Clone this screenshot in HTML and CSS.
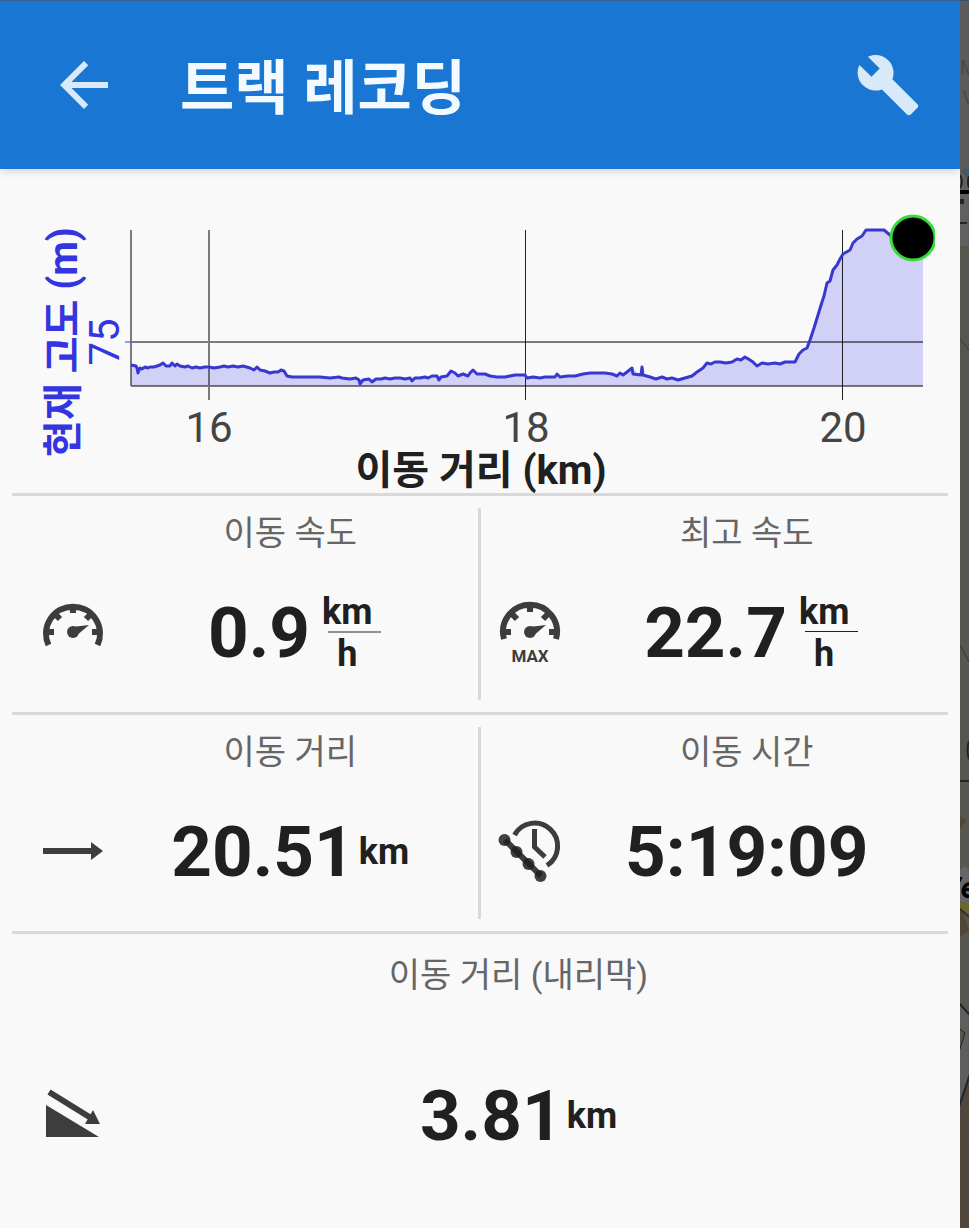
FILE: index.html
```html
<!DOCTYPE html>
<html lang="ko">
<head>
    <meta charset="UTF-8">
    <meta name="viewport" content="width=device-width, initial-scale=1">
    <title>트랙 레코딩</title>
    <link rel="stylesheet" href="styles.css">
</head>
<body>
<main id="panel">
    <header id="toolbar">
        <button class="icon-btn" type="button" aria-label="뒤로">
            <svg class="back" viewBox="0 0 24 24"><path d="M20 11H7.83l5.59-5.59L12 4l-8 8 8 8 1.41-1.41L7.83 13H20v-2z"/></svg>
        </button>
        <h1>트랙 레코딩</h1>
        <button class="icon-btn" type="button" aria-label="설정">
            <svg class="wrench" viewBox="0 0 24 24"><path d="M22.7 19l-9.1-9.1c.9-2.3.4-5-1.5-6.9-2-2-5-2.4-7.4-1.3L9 6 6 9 1.6 4.7C.4 7.1.9 10.1 2.9 12.1c1.9 1.9 4.6 2.4 6.9 1.5l9.1 9.1c.4.4 1 .4 1.4 0l2.3-2.3c.5-.4.5-1.1.1-1.4z"/></svg>
        </button>
    </header>

    <!-- altitude over distance -->
    <svg id="chart" viewBox="0 169 960 324">
        <defs>
            <clipPath id="plot"><rect x="125" y="200" width="810" height="200"/></clipPath>
        </defs>
        <path class="area" d="M131 386V365L136 366 138 373 140 368 150 367 160 365 163 363 166 366 172 363 175 366 177 364 185 367 192 368 209 367 228 366 243 366 250 368 254 370 257 367 260 370 270 373 278 372 281 370 284 371 287 376 292 377 339 377 350 379 359 380 360 384 363 380 385 378 432 376 447 376 451 371 458 376 468 376 473 370 477 374 490 376 505 377 515 375 525 375 527 378 555 377 575 376 590 373 605 373 617 376 627 372 632 368 640 375 656 379 678 380 692 376 703 368 707 363 732 362 745 357 757 366 762 363 795 362 803 350 807 348 814 328 822 302 827 283 833 270 843 254 850 250 853 243 862 236 866 230 884 230 893 240H923V386z"/>
        <g class="grid">
            <path d="M131 230V386M131 386H923M209 230V400M131 342H923"/>
            <path class="thin" d="M525.500 230V400M842.500 230V400"/>
            <path class="tick" d="M125 342H131"/>
        </g>
        <polyline class="line" points="131,365 136,366 137,368 138,373 140,368 142,369 145,367 148,368 150,367 154,367 157,366 160,365 163,363 166,366 170,366 172,363 175,366 177,364 180,366 185,367 188,366 192,368 196,367 200,368 205,367 209,367 214,368 220,367 224,366 228,367 233,366 238,367 243,366 250,368 254,370 257,367 260,370 265,371 270,373 274,372 278,372 281,370 284,371 287,376 292,377 300,377 312,377 320,377 330,378 339,377 342,378 350,379 356,378 359,380 360,384 363,380 369,379 372,382 376,379 381,379 385,378 390,379 395,378 400,378 405,379 410,378 412,381 415,378 420,378 425,377 428,378 432,376 437,376 439,380 441,377 447,376 451,371 455,373 458,376 463,374 468,376 470,373 473,370 477,374 485,374 490,376 497,377 505,377 510,376 515,375 525,375 527,378 533,377 540,378 545,377 555,377 557,374 560,377 568,376 575,376 583,374 590,373 605,373 612,374 617,376 620,373 623,375 627,372 632,368 633,374 641,375 642,367 643,375 650,377 656,379 662,377 667,379 672,378 678,380 685,378 692,376 697,372 703,368 707,363 711,364 715,362 720,362 726,363 732,362 737,359 741,360 745,357 750,360 753,362 757,366 762,363 768,364 775,363 780,364 785,362 795,362 799,354 803,350 807,348 810,340 814,328 818,315 822,302 824,296 827,283 830,281 833,270 837,265 840,259 843,254 850,250 853,243 857,239 862,236 866,230 884,230 890,235 893,240"/>
        <circle class="marker" cx="913" cy="238" r="22" clip-path="url(#plot)"/>
        <text class="num" x="209" y="442">16</text>
        <text class="num" x="526" y="442">18</text>
        <text class="num" x="843" y="442">20</text>
        <text class="num blue" transform="translate(119 342) rotate(-90)">75</text>
        <text class="axis" x="481" y="484">이동 거리 (km)</text>
        <text class="axis blue" transform="translate(77 342) rotate(-90)">현재 고도 (m)</text>
    </svg>

    <section class="row">
        <div class="cell">
            <h2>이동 속도</h2>
            <svg class="icon" viewBox="-30 -30 60 60">
                <path class="stroke" d="M-24.500 13A27 27 0 1 1 24.500 13M0 -27V-19M-27 0H-19M27 0H19"/>
                <path class="stroke" d="M-19 -19L-13 -13M19 -19L13 -13"/>
                <circle r="6"/><path d="M-1 -5L16 -7 3 4z"/>
            </svg>
            <div class="value">0.9
                <div class="unit fraction"><span>km</span><span class="per">h</span></div>
            </div>
        </div>
        <div class="cell">
            <h2>최고 속도</h2>
            <svg class="icon" viewBox="-30 -30 60 60">
                <path class="stroke" d="M-26 7A27 27 0 1 1 26 7M0 -28V-20M-27 0H-19M27 0H19"/>
                <path class="stroke" d="M-19 -19L-13 -13M19 -19L13 -13"/>
                <circle r="6"/><path d="M-1 -5L16 -7 3 4z"/>
                <text y="30">MAX</text>
            </svg>
            <div class="value">22.7
                <div class="unit fraction"><span>km</span><span class="per dark">h</span></div>
            </div>
        </div>
    </section>

    <section class="row">
        <div class="cell">
            <h2>이동 거리</h2>
            <svg class="icon" viewBox="-30 -30 60 60">
                <path d="M-30 -3H18V-9L30 0 18 9V3H-30z"/>
            </svg>
            <div class="value">20.51
                <div class="unit">km</div>
            </div>
        </div>
        <div class="cell">
            <h2>이동 시간</h2>
            <svg class="icon" viewBox="-30 -30 60 60">
                <path class="stroke clock" d="M-15.500 -16A23 23 0 1 1 17 14.500M4.500 -22V-4L15 6"/>
                <path class="stroke track" d="M-25 -11L11 25"/>
                <g class="dots"><circle cx="-25.500" cy="-11" r="6"/><circle cx="-13.500" cy="1" r="6"/><circle cx="-1.500" cy="13" r="6"/><circle cx="10.500" cy="25" r="6"/></g>
            </svg>
            <div class="value">5:19:09</div>
        </div>
    </section>

    <section class="row last">
        <div class="cell">
            <h2>이동 거리 (내리막)</h2>
            <svg class="icon" viewBox="-30 -30 60 60">
                <path d="M-27 -10V22H26z"/>
                <path class="stroke" d="M-24 -23L18 3"/>
                <path d="M20 -5L27 9H12z"/>
            </svg>
            <div class="value">3.81
                <div class="unit">km</div>
            </div>
        </div>
    </section>
</main>

<!-- dimmed map behind the panel -->
<aside id="map">
    <svg viewBox="0 0 9 1228" preserveAspectRatio="xMinYMin slice">
        <path fill="#5b5c5b" d="M0 0H9V170H0z"/>
        <path fill="#34516b" d="M0 0H9V1H0z"/>
        <path fill="#3f5b6e" d="M2 168H9V180z"/>
        <path fill="#5f605f" d="M0 170L9 182V246H0z"/>
        <path d="M0 190H9V194H0z"/>
        <path fill="#242424" d="M0 199H4V204H0zM0 222H7V224H0z"/>
        <path fill="none" stroke="#222" stroke-width="2" d="M0 175Q4 182 0 188M9 176Q7 182 9 188"/>
        <path fill="none" stroke="#3d3228" stroke-width="1" d="M0 339L9 350M0 645L9 662"/>
        <path fill="none" stroke="#242424" stroke-width="2" d="M9 741Q6 750 9 759M0 781H9"/>
        <path fill="#50463a" stroke="#5d4936" d="M0 816L6 821 0 829M0 906L9 930 0 937"/>
        <path fill="#666" d="M0 870L5 866 9 870V905L0 901z"/>
        <path fill="#6b682b" d="M0 901L9 905V914L0 908z"/>
        <path fill="none" stroke="#303028" stroke-width="2" d="M0 909L9 917"/>
        <path fill="#50463c" d="M0 1110L9 1075V1228H0z"/>
        <path fill="#5e5e5d" stroke="#242424" stroke-width="2" d="M-2 1002L10 1015V1074L-2 1110z"/>
        <path fill="#55564c" stroke="#242424" d="M0 1029L5 1033 0 1049"/>
        <path fill="none" stroke="#604936" d="M9 1143L3 1149 6 1153 0 1163"/>
        <text class="place" x="-10" y="898">/e</text>
        <text class="faint" x="0" y="75">M</text>
        <text class="faint" x="2" y="105">V</text>
    </svg>
</aside>
</body>
</html>
```
FILE: styles.css
```css
* {
    margin: 0;
    padding: 0;
    box-sizing: border-box;
}

body {
    display: flex;
    min-height: 100vh;
    font-family: Roboto, "Noto Sans CJK KR", sans-serif;
    background-color: #57574f;
    color: #202020;
}

#panel {
    flex: 1;
    display: flex;
    flex-direction: column;
    background-color: #f9f9f9;
}

/* toolbar */
#toolbar {
    display: flex;
    align-items: center;
    height: 169px;
    padding: 0 39px 0 48px;
    border-top: 1px solid #34618c;
    background-color: #1976d3;
    box-shadow: 0 2px 8px rgba(0, 0, 0, 0.16);
}

#toolbar h1 {
    flex: 1;
    margin-left: 60px;
    padding-top: 8px;
    font-size: 59px;
    line-height: 72px;
    font-weight: 700;
    color: #f2faff;
}

.icon-btn {
    display: flex;
    border: none;
    background: none;
    cursor: pointer;
}

.icon-btn svg {
    fill: #d8e9f9;
}

.back {
    width: 72px;
    height: 72px;
}

.wrench {
    width: 66px;
    height: 66px;
}

/* chart */
#chart {
    display: block;
    width: 100%;
}

.area {
    fill: #d1d1f8;
}

.grid path {
    fill: none;
    stroke: #000;
    stroke-opacity: 0.5;
    stroke-width: 2;
}

.grid .thin {
    stroke-opacity: 0.85;
    stroke-width: 1;
}

.grid .tick {
    stroke: #3838d0;
}

.line {
    fill: none;
    stroke: #3838d0;
    stroke-width: 3;
    stroke-linejoin: round;
}

.marker {
    fill: #000;
    stroke: #38dc38;
    stroke-width: 3;
}

#chart text {
    text-anchor: middle;
}

.num {
    font-size: 42px;
    fill: #444;
}

.axis {
    font-size: 40px;
    font-weight: 700;
    fill: #202020;
}

#chart .blue {
    fill: #3434e0;
}

/* readings */
.row {
    display: flex;
    height: 219px;
    margin: 0 12px;
    padding: 12px 14px 0 12px;
    border-top: 3px solid #d9d9d9;
}

.cell {
    flex: 1;
    display: grid;
    grid-template-columns: 60px 1fr;
    grid-template-rows: 44px 1fr;
    padding-left: 19px;
}

.cell + .cell {
    position: relative;
    margin-left: 3px;
}

/* divider between two cells */
.cell + .cell::before {
    content: "";
    position: absolute;
    left: -3px;
    top: 0;
    bottom: 12px;
    width: 3px;
    background-color: #d9d9d9;
}

.cell h2 {
    grid-column: 2;
    text-align: center;
    font-size: 34px;
    line-height: 50px;
    font-weight: 400;
    color: #666;
}

.icon {
    align-self: center;
    width: 60px;
    height: 60px;
    overflow: visible;
    fill: #3d3d3d;
}

.icon .stroke {
    fill: none;
    stroke: #3d3d3d;
    stroke-width: 6;
}

.icon .clock {
    stroke-width: 5;
}

.icon .dots {
    fill: #202020;
    fill-opacity: 0.85;
}

.icon text {
    font-size: 17px;
    font-weight: 700;
    text-anchor: middle;
}

.value {
    display: flex;
    justify-content: center;
    align-items: center;
    gap: 4px;
    padding-top: 2px;
    font-size: 71px;
    line-height: 84px;
    font-weight: 700;
}

.unit {
    display: flex;
    flex-direction: column;
    text-align: center;
    font-size: 36px;
    line-height: 42px;
}

.fraction {
    margin-left: 8px;
}

.per {
    position: relative;
}

.per::before {
    content: "";
    position: absolute;
    left: 6px;
    right: -9px;
    top: -2px;
    height: 2px;
    background-color: #909090;
}

.per.dark::before {
    height: 1px;
    background-color: #202020;
}

.last {
    flex: 1;
    padding-top: 16px;
}

.last .icon,
.last .value {
    margin-top: 8px;
}

/* map strip */
#map {
    width: 9px;
    overflow: hidden;
}

#map svg {
    display: block;
    width: 9px;
    height: 1228px;
}

.place {
    font-size: 30px;
    font-weight: 700;
    font-style: italic;
}

.faint {
    font-size: 20px;
    fill: #4a4a4a;
}
```
